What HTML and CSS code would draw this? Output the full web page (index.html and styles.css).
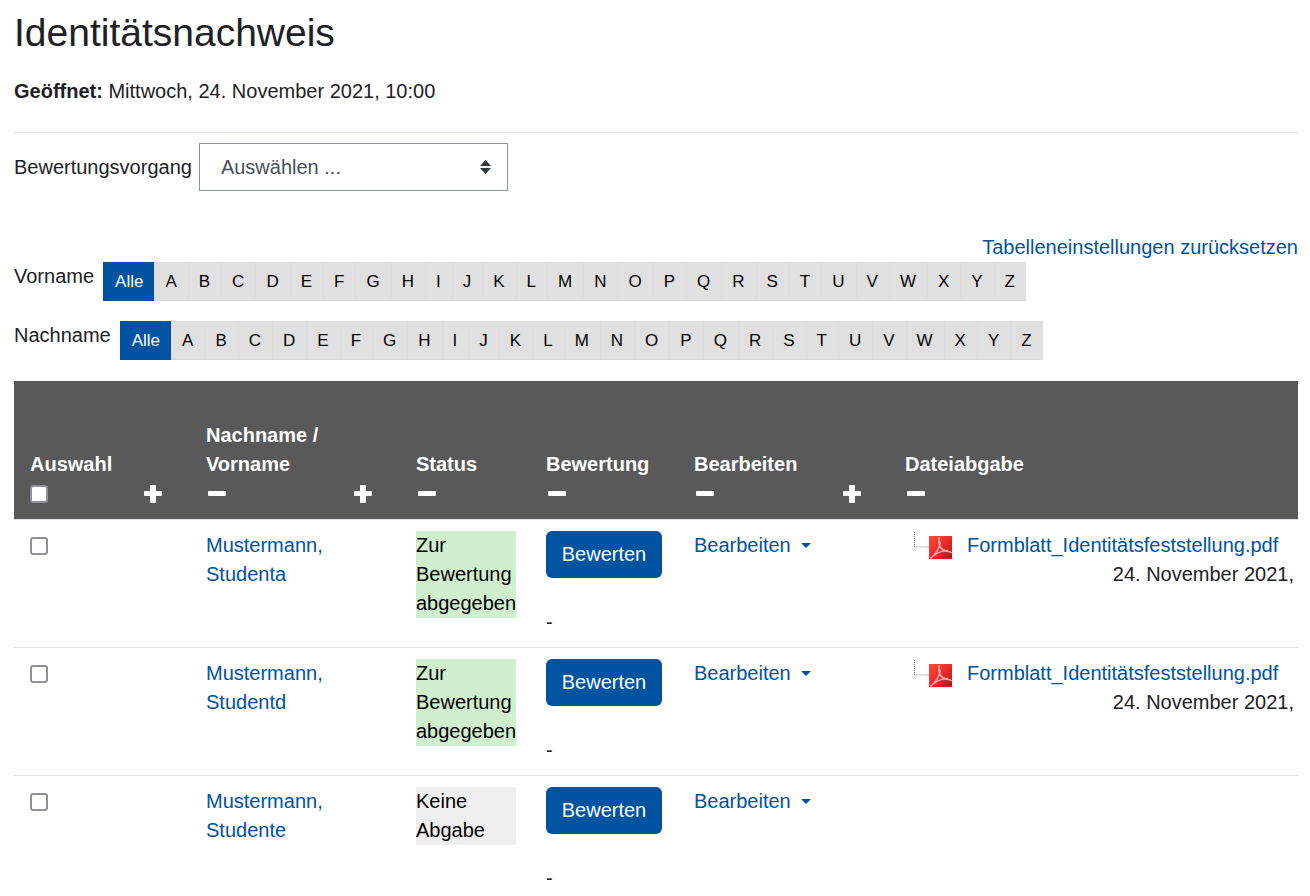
FILE: index.html
```html
<!DOCTYPE html>
<html lang="de">
<head>
<meta charset="utf-8">
<meta name="viewport" content="width=device-width, initial-scale=1">
<title>Identitätsnachweis</title>
<link rel="stylesheet" href="styles.css">
</head>
<body>
<svg class="sprite" aria-hidden="true">
  <defs>
    <linearGradient id="pdf-red" x1="0" y1="0" x2="1" y2="1">
      <stop offset="0" stop-color="#fb4a34"/>
      <stop offset="0.5" stop-color="#ee2a2a"/>
      <stop offset="1" stop-color="#b80f1c"/>
    </linearGradient>
  </defs>
  <symbol id="plus" viewBox="0 0 18 18"><path d="M7 0h4a1 1 0 0 1 1 1v5h5a1 1 0 0 1 1 1v3a1 1 0 0 1-1 1h-5v6a1 1 0 0 1-1 1H7a1 1 0 0 1-1-1v-6H1a1 1 0 0 1-1-1V7a1 1 0 0 1 1-1h5V1a1 1 0 0 1 1-1z" fill="#fff"/></symbol>
  <symbol id="minus" viewBox="0 0 18 18"><rect y="6" width="18" height="5" rx="1" fill="#fff"/></symbol>
  <symbol id="pdf" viewBox="0 0 39 29">
    <path d="M1.500 1v15H16" fill="none" stroke="#777" stroke-width="1" stroke-dasharray="1 1"/>
    <rect x="16" y="5" width="23" height="23" fill="url(#pdf-red)"/>
    <path d="M26 6.500c0 3-.2 6 .6 8.500-1.600 4-4.600 8.500-8.600 12M26.600 15c2 3 4.400 5 8 5.500 1.500.2 3 .2 3.400.8M20 25c4-3 9-5.500 14.500-5.500M26.600 15c.8-1.500.8-2.500.4-4" fill="none" stroke="#f7b4ae" stroke-width="1.500" stroke-linecap="round"/>
  </symbol>
</svg>
<main class="page">
  <h1 class="title">Identitätsnachweis</h1>
  <p class="opened"><strong>Geöffnet:</strong> Mittwoch, 24. November 2021, 10:00</p>
  <div class="actions">
    <label for="vorgang">Bewertungsvorgang</label>
    <div class="select-wrap">
      <select id="vorgang" class="select"><option>Auswählen ...</option></select>
      <svg class="select-arrow" viewBox="0 0 11 14" aria-hidden="true"><path d="M5.500 0 11 6H0zM0 8h11l-5.500 6z" fill="#343a40"/></svg>
    </div>
  </div>
  <div class="reset"><a href="#">Tabelleneinstellungen zurücksetzen</a></div>
  <nav class="initials" aria-label="Vorname">
    <span>Vorname</span>
    <div class="letters"><a class="active" href="#">Alle</a><a href="#">A</a><a href="#">B</a><a href="#">C</a><a href="#">D</a><a href="#">E</a><a href="#">F</a><a href="#">G</a><a href="#">H</a><a href="#">I</a><a href="#">J</a><a href="#">K</a><a href="#">L</a><a href="#">M</a><a href="#">N</a><a href="#">O</a><a href="#">P</a><a href="#">Q</a><a href="#">R</a><a href="#">S</a><a href="#">T</a><a href="#">U</a><a href="#">V</a><a href="#">W</a><a href="#">X</a><a href="#">Y</a><a href="#">Z</a></div>
  </nav>
  <nav class="initials" aria-label="Nachname">
    <span>Nachname</span>
    <div class="letters"><a class="active" href="#">Alle</a><a href="#">A</a><a href="#">B</a><a href="#">C</a><a href="#">D</a><a href="#">E</a><a href="#">F</a><a href="#">G</a><a href="#">H</a><a href="#">I</a><a href="#">J</a><a href="#">K</a><a href="#">L</a><a href="#">M</a><a href="#">N</a><a href="#">O</a><a href="#">P</a><a href="#">Q</a><a href="#">R</a><a href="#">S</a><a href="#">T</a><a href="#">U</a><a href="#">V</a><a href="#">W</a><a href="#">X</a><a href="#">Y</a><a href="#">Z</a></div>
  </nav>
  <table class="grading">
    <colgroup>
      <col class="col-select"><col class="col-toggle"><col class="col-name"><col class="col-toggle"><col class="col-status"><col class="col-grade"><col class="col-edit"><col class="col-toggle"><col>
    </colgroup>
    <thead>
      <tr>
        <th scope="col">Auswahl<div class="tool"><input class="check" type="checkbox" aria-label="Alle auswählen"></div></th>
        <th><div class="tool"><button class="toggle" type="button" aria-label="Spalte einblenden"><svg><use href="#plus"/></svg></button></div></th>
        <th scope="col">Nachname / Vorname<div class="tool"><button class="toggle" type="button" aria-label="Name ausblenden"><svg><use href="#minus"/></svg></button></div></th>
        <th><div class="tool"><button class="toggle" type="button" aria-label="Spalte einblenden"><svg><use href="#plus"/></svg></button></div></th>
        <th scope="col">Status<div class="tool"><button class="toggle" type="button" aria-label="Status ausblenden"><svg><use href="#minus"/></svg></button></div></th>
        <th scope="col">Bewertung<div class="tool"><button class="toggle" type="button" aria-label="Bewertung ausblenden"><svg><use href="#minus"/></svg></button></div></th>
        <th scope="col">Bearbeiten<div class="tool"><button class="toggle" type="button" aria-label="Bearbeiten ausblenden"><svg><use href="#minus"/></svg></button></div></th>
        <th><div class="tool"><button class="toggle" type="button" aria-label="Spalte einblenden"><svg><use href="#plus"/></svg></button></div></th>
        <th scope="col">Dateiabgabe<div class="tool"><button class="toggle" type="button" aria-label="Dateiabgabe ausblenden"><svg><use href="#minus"/></svg></button></div></th>
      </tr>
    </thead>
    <tbody>
      <tr>
        <td><div class="tool"><input class="check" type="checkbox" aria-label="Studenta auswählen"></div></td>
        <td></td>
        <td><a href="#">Mustermann, Studenta</a></td>
        <td></td>
        <td><div class="status submitted">Zur Bewertung abgegeben</div></td>
        <td><button class="grade" type="button">Bewerten</button><div>-</div></td>
        <td><button class="menu" type="button">Bearbeiten</button></td>
        <td></td>
        <td class="files"><div class="file"><svg class="file-icon" aria-hidden="true"><use href="#pdf"/></svg><a href="#">Formblatt_Identitätsfeststellung.pdf</a></div><div class="date">24. November 2021,</div></td>
      </tr>
      <tr>
        <td><div class="tool"><input class="check" type="checkbox" aria-label="Studentd auswählen"></div></td>
        <td></td>
        <td><a href="#">Mustermann, Studentd</a></td>
        <td></td>
        <td><div class="status submitted">Zur Bewertung abgegeben</div></td>
        <td><button class="grade" type="button">Bewerten</button><div>-</div></td>
        <td><button class="menu" type="button">Bearbeiten</button></td>
        <td></td>
        <td class="files"><div class="file"><svg class="file-icon" aria-hidden="true"><use href="#pdf"/></svg><a href="#">Formblatt_Identitätsfeststellung.pdf</a></div><div class="date">24. November 2021,</div></td>
      </tr>
      <tr>
        <td><div class="tool"><input class="check" type="checkbox" aria-label="Studente auswählen"></div></td>
        <td></td>
        <td><a href="#">Mustermann, Studente</a></td>
        <td></td>
        <td><div class="status">Keine Abgabe</div></td>
        <td><button class="grade" type="button">Bewerten</button><div>-</div></td>
        <td><button class="menu" type="button">Bearbeiten</button></td>
        <td></td>
        <td></td>
      </tr>
    </tbody>
  </table>
</main>
</body>
</html>
```
FILE: styles.css
```css
* { box-sizing: border-box; }
body {
  margin: 0;
  background: #fff;
  color: #1d2125;
  font: 20px/29px "Liberation Sans", Arial, sans-serif;
}
a { color: #0053a1; text-decoration: none; }
button, select { font: inherit; }
.sprite { position: absolute; width: 0; height: 0; }
.page { padding: 9px 12px 0 14px; }
.title { margin: 0; font-size: 39px; line-height: 47px; font-weight: 400; }
.opened { margin: 21px 0 26px; }
.actions {
  display: flex;
  align-items: center;
  gap: 7px;
  padding-top: 10px;
  border-top: 1px solid #dee2e6;
}
.select-wrap { position: relative; width: 309px; }
.select {
  display: block;
  width: 100%;
  height: 48px;
  padding: 0 36px 0 21px;
  border: 1px solid #8f959e;
  border-radius: 0;
  background: #fff;
  color: #495057;
  appearance: none;
}
.select-arrow {
  position: absolute;
  right: 17px;
  top: 17px;
  width: 11px;
  height: 14px;
  pointer-events: none;
}
.reset { margin-top: 42px; text-align: right; }
.initials { display: flex; align-items: flex-start; gap: 9px; margin-bottom: 20px; }
.letters { display: flex; font-size: 17px; line-height: 37px; }
.letters a {
  padding: 0 11px 0 10px;
  border: solid #dbdbdb;
  border-width: 1px 0 1px 1px;
  background: #e0e0e0;
  color: #000;
}
.letters a.active { padding: 0 11px; border-color: #0053a1; background: #0053a1; color: #fff; }
.grading {
  width: 100%;
  margin-top: 21px;
  table-layout: fixed;
  border-collapse: separate;
  border-spacing: 0;
}
.col-select { width: 112px; }
.col-toggle { width: 64px; }
.col-name { width: 146px; }
.col-status { width: 130px; }
.col-grade { width: 148px; }
.col-edit { width: 147px; }
.grading th {
  height: 138px;
  padding: 11px 14px 11px 16px;
  background: #595959;
  color: #fff;
  text-align: left;
  vertical-align: bottom;
}
.grading td { padding: 11px 14px 11px 16px; border-top: 1px solid #dee2e6; vertical-align: top; }
.grading tr:last-child td { padding-bottom: 4px; }
.tool { display: flex; align-items: center; height: 29px; }
.check {
  width: 18px;
  height: 18px;
  margin: 0;
  border: 2px solid #8f8f9d;
  border-radius: 3px;
  background: #fff;
  appearance: none;
}
.toggle { display: flex; padding: 0 2px; border: 0; background: none; }
.toggle svg { width: 18px; height: 18px; }
.status { background: #efefef; color: #000; }
.submitted { background: #cfefcf; }
.grade {
  display: block;
  width: 116px;
  height: 47px;
  margin-bottom: 30px;
  padding: 0;
  border: 0;
  border-radius: 6px;
  background: #0053a1;
  color: #fff;
}
.grade + div { height: 28px; }
.menu {
  display: flex;
  align-items: center;
  gap: 10px;
  padding: 0;
  border: 0;
  background: none;
  color: #0053a1;
}
.menu::after { content: ""; border: solid transparent; border-width: 5px 5px 0; border-top-color: #0053a1; }
.grading .files { padding-left: 24px; padding-right: 4px; }
.file { display: flex; gap: 15px; white-space: nowrap; }
.file-icon { flex: none; width: 39px; height: 29px; }
.date { text-align: right; }
```
